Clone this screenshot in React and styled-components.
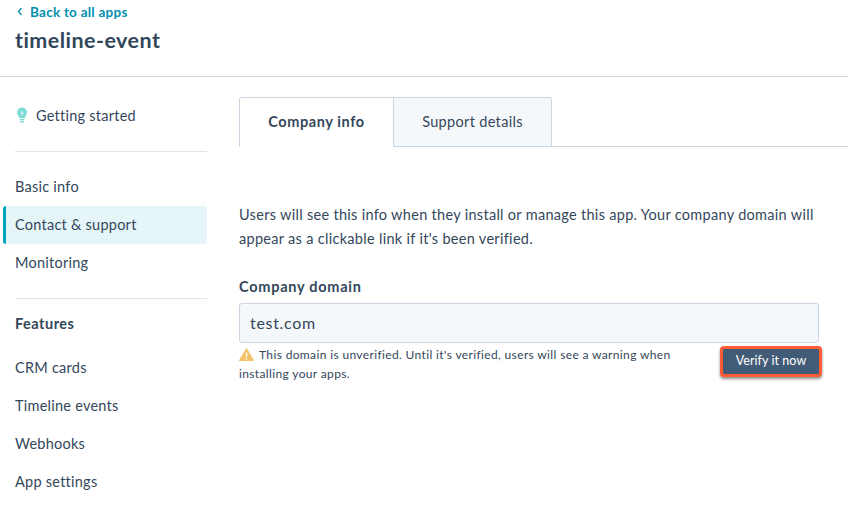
import React from "react";
import styled, { createGlobalStyle } from "styled-components";

const Global = createGlobalStyle`
  html, body { margin: 0; padding: 0; background: #fff; }
  body { width: 848px; height: 508px; overflow: hidden; font-family: Lato, "Noto Sans", sans-serif; color: #33475b; }
`;
const Page = styled.div`display: flex; flex-direction: column; width: 848px; height: 508px; overflow: hidden;`;
const Header = styled.header`
  height: 77px; box-sizing: border-box; border-bottom: 1px solid #cbd6e2; padding: 3px 0 0 15px; flex: none;
`;
const BackLink = styled.a`
  display: flex; align-items: center; gap: 7px; height: 17px; font-size: 13.5px; font-weight: 700; color: #0091ae; letter-spacing: 0.25px;
  padding-left: 2px;
`;
const Title = styled.h1`
  margin: 7px 0 0; font-size: 21.5px; line-height: 26px; font-weight: 700; color: #33475b; letter-spacing: 0.45px;
`;
const Body = styled.div`display: flex; flex: 1; min-height: 0;`;
const Sidebar = styled.nav`
  width: 207px; flex: none; box-sizing: border-box; padding: 20px 0 0 3px; display: flex; flex-direction: column;
`;
const Item = styled.div`
  height: 38px; display: flex; align-items: center; gap: 8px; box-sizing: border-box; padding: 0 0 2px ${p => p.$active ? 9 : 12}px;
  margin-top: ${p => p.$mt || 0}px;
  font-size: 14.5px; letter-spacing: ${p => p.$bold ? 0.5 : 0.25}px; font-weight: ${p => p.$bold ? 700 : 400}; color: #33475b;
  background: ${p => p.$active ? "#e5f5f8" : "transparent"};
  border-left: ${p => p.$active ? "3px solid #00a4bd" : "none"};
  border-radius: ${p => p.$active ? "3px" : "0"};
`;
const Divider = styled.div`height: 1px; background: #dfe3eb; margin: ${p => p.$m}; `;
const Main = styled.main`flex: 1; min-width: 0; padding: 20px 0 0 32px;`;
const Tabs = styled.div`display: flex; height: 50px; box-sizing: border-box; border-bottom: 1px solid #cbd6e2; `;
const Tab = styled.div`
  box-sizing: border-box; height: 50px; width: ${p => p.$w}px; display: flex; align-items: center; justify-content: center;
  border: 1px solid #cbd6e2; font-size: 14.5px; padding-bottom: 1px;
  letter-spacing: ${p => p.$active ? 0.6 : 0.33}px;
  font-weight: ${p => p.$active ? 700 : 400};
  background: ${p => p.$active ? "#fff" : "#f5f8fa"};
  border-left-width: ${p => p.$active ? 1 : 0}px;
  border-bottom: ${p => p.$active ? "1px solid #fff" : "1px solid #cbd6e2"};
  border-radius: ${p => p.$active ? "3px 0 0 0" : "0 3px 0 0"};
`;
const Intro = styled.p`
  margin: 56px 0 0; width: 590px; font-size: 14.5px; line-height: 24px; letter-spacing: 0.3px;
`;
const Label = styled.div`margin-top: 24px; font-size: 14.5px; font-weight: 700; line-height: 24px; letter-spacing: 0.75px;`;
const Input = styled.div`
  margin-top: 4px; width: 580px; height: 40px; box-sizing: border-box; background: #f5f8fa; border: 1px solid #cbd6e2; border-radius: 3px;
  display: flex; align-items: center; padding: 0 0 2px 10px; font-size: 16px; letter-spacing: 0.7px;
`;
const HelpRow = styled.div`display: flex; width: 583px; justify-content: space-between; align-items: flex-start; margin-top: 3px;`;
const Help = styled.div`width: 450px; font-size: 12px; line-height: 19px; letter-spacing: 0.36px; margin-top: -1px;`;
const HelpIcon = styled.svg`width: 15px; height: 13px; vertical-align: -2px; margin-right: 5px;`;
const VerifyButton = styled.button`
  width: 102px; height: 31px; box-sizing: border-box; border: 3px solid #ff5c35; border-radius: 4px; background: #425b76; color: #fff;
  font-family: inherit; font-size: 12.5px; letter-spacing: 0.05px; padding: 0 0 2px; box-shadow: 0 2px 3px rgba(0,0,0,.45);
`;
const Bulb = styled.svg`width: 12px; height: 17px; flex: none; margin-left: 1px;`;

export default function App() {
  return (
    <Page>
      <Global />
      <Header>
        <BackLink>
          <svg width="6" height="9" viewBox="0 0 6 9" fill="none"><path d="M4.5 1 1.5 4.5 4.5 8" stroke="#0091ae" strokeWidth="1.3" /></svg>
          Back to all apps
        </BackLink>
        <Title>timeline-event</Title>
      </Header>
      <Body>
        <Sidebar>
          <Item>
            <Bulb viewBox="0 0 12 17">
              <path d="M6 0.5a5 5 0 0 0-5 5c0 2.3 1.6 3.4 2.2 5.5h5.6c.6-2.1 2.2-3.2 2.2-5.5a5 5 0 0 0-5-5z" fill="#7fdcd4" />
              <path d="M6.8 3 4.5 6.5h2L5.3 9.2 8 5.7H6z" fill="#fff" />
              <rect x="3.5" y="12" width="5" height="1.4" fill="#7fdcd4" />
              <rect x="4" y="14.2" width="4" height="1.4" fill="#7fdcd4" />
            </Bulb>
            Getting started
          </Item>
          <Divider $m="16px 0 16px 12px" />
          <Item>Basic info</Item>
          <Item $active>Contact &amp; support</Item>
          <Item>Monitoring</Item>
          <Divider $m="16px 0 6px 12px" />
          <Item $bold>Features</Item>
          <Item $mt={6}>CRM cards</Item>
          <Item>Timeline events</Item>
          <Item>Webhooks</Item>
          <Item>App settings</Item>
        </Sidebar>
        <Main>
          <Tabs>
            <Tab $active $w={155}>Company info</Tab>
            <Tab $w={158}>Support details</Tab>
          </Tabs>
          <Intro>Users will see this info when they install or manage this app. Your company domain will appear as a clickable link if it's been verified.</Intro>
          <Label>Company domain</Label>
          <Input>test.com</Input>
          <HelpRow>
            <Help>
              <HelpIcon viewBox="0 0 15 13">
                <path d="M7.5 0.5 14.8 12.8H0.2z" fill="#f5c26b" stroke="#f5c26b" strokeLinejoin="round" />
                <rect x="6.8" y="4.5" width="1.4" height="4.5" fill="#fff" />
                <rect x="6.8" y="10" width="1.4" height="1.4" fill="#fff" />
              </HelpIcon>
              This domain is unverified. Until it's verified, users will see a warning when installing your apps.
            </Help>
            <VerifyButton>Verify it now</VerifyButton>
          </HelpRow>
        </Main>
      </Body>
    </Page>
  );
}
